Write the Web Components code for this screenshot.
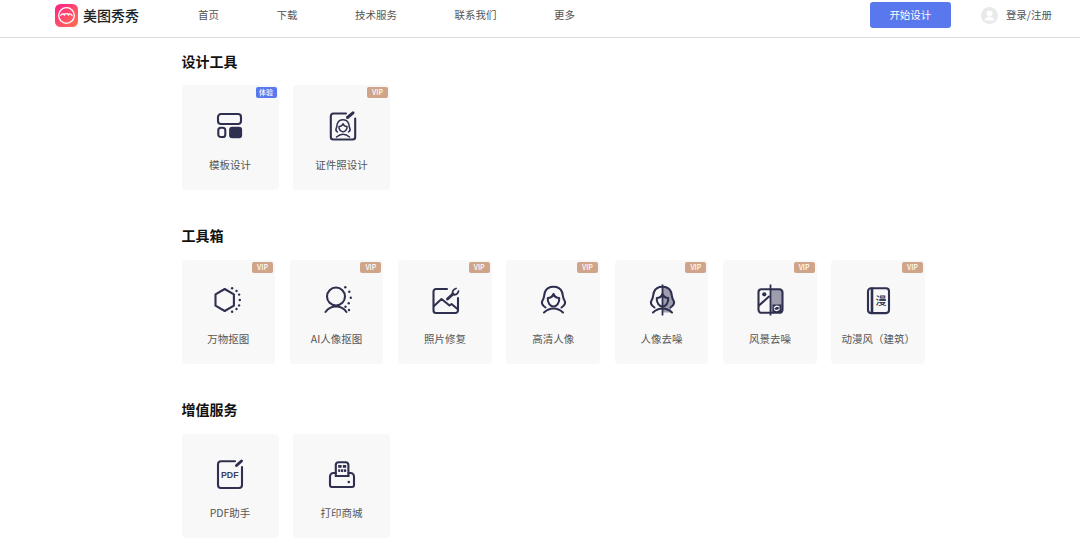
<!DOCTYPE html>
<html lang="zh"><head><meta charset="utf-8"><title>美图秀秀</title>
<style>
html,body{margin:0;padding:0;background:#fff;height:555px;overflow:hidden;font-family:"Noto Sans CJK SC","Liberation Sans",sans-serif}
svg{display:block}
.s{fill:none;stroke:#2f3050;stroke-width:2.1;stroke-linecap:round;stroke-linejoin:round}
.t{fill:none;stroke:#2f3050;stroke-width:1.5;stroke-linecap:round;stroke-linejoin:round}
.p{fill:none;stroke:#2f3050;stroke-width:3;stroke-linecap:round}
.f{fill:#2f3050}
</style></head><body>
<svg width="0" height="0" style="position:absolute"><defs>
<pattern id="ck" width="2" height="2" patternUnits="userSpaceOnUse"><rect width="2" height="2" fill="#dfdfe4"/><rect width="1" height="1" fill="#5a5b75"/><rect x="1" y="1" width="1" height="1" fill="#5a5b75"/></pattern>
</defs></svg>

<app-header></app-header>
<main-page>
<tool-section heading="设计工具">
  <tool-card wide label="模板设计" badge="体验" kind="blue"><svg viewBox="-0.5 0 32 32" width="32" height="32"><rect class="s" x="3.500" y="5" width="23" height="10" rx="3"/><rect class="s" x="3.800" y="18.800" width="7" height="9.200" rx="2.600"/><rect class="f" x="14.600" y="17.800" width="13" height="11.400" rx="3"/></svg></tool-card>
  <tool-card wide label="证件照设计" badge="VIP"><svg viewBox="0 0 32 32" width="32" height="32"><path class="s" d="M20 4.500H7.300a2.500 2.500 0 0 0-2.500 2.500V28a2.500 2.500 0 0 0 2.500 2.500h19.400a2.500 2.500 0 0 0 2.500-2.500V9.500"/><path class="p" d="M21.500 8.500l5.500-4.700"/><path class="t" d="M11.500 23c-1.500-1-2-2.500-1.200-4 .9-1.500.5-3 1-4.300 1-2.500 3.500-3.900 5.700-3.900s4.700 1.400 5.700 3.900c.5 1.300.1 2.800 1 4.300.8 1.500.3 3-1.200 4M13 17.500c1.800 0 3.300-1 4-2.800.7 1.800 2.200 2.800 4 2.800.3 3-1.800 5.200-4 5.200s-4.300-2.200-4-5.200zM10.500 28c2-1.800 4-2.800 6.500-2.800s4.500 1 6.500 2.800"/></svg></tool-card>
</tool-section>
<tool-section heading="工具箱">
  <tool-card label="万物抠图" badge="VIP"><svg viewBox="-0.5 0 32 32" width="32" height="32"><path class="s" d="M12.200 5l9.200 5.300v11.400l-9.200 5.300L3 21.700V10.300z"/><g class="f"><circle cx="19.600" cy="4.300" r="1.200"/><circle cx="24" cy="7" r="1.200"/><circle cx="26.600" cy="10.600" r="1.200"/><circle cx="27.300" cy="16" r="1.200"/><circle cx="26.600" cy="21.400" r="1.200"/><circle cx="24" cy="25" r="1.200"/><circle cx="19.600" cy="27.700" r="1.200"/></g></svg></tool-card>
  <tool-card label="AI人像抠图" badge="VIP"><svg viewBox="-0.5 0 32 32" width="32" height="32"><circle class="s" cx="14.500" cy="12.500" r="9"/><path class="s" d="M4 28c2.500-3.500 6.500-5.500 10.500-5.500S22.500 24.500 25 28"/><g class="f"><circle cx="23.800" cy="3.300" r="1.200"/><circle cx="27.800" cy="7.700" r="1.200"/><circle cx="29.300" cy="13.700" r="1.200"/><circle cx="27.200" cy="19.300" r="1.200"/><circle cx="24" cy="22.800" r="1.200"/><circle cx="27.500" cy="26" r="1.200"/></g></svg></tool-card>
  <tool-card label="照片修复" badge="VIP"><svg viewBox="-0.5 0 32 32" width="32" height="32"><path class="s" d="M17.500 5H6.500A2.500 2.500 0 0 0 4 7.500V26.500A2.500 2.500 0 0 0 6.500 29h19.500a2.500 2.500 0 0 0 2.500-2.500V14"/><path class="s" d="M4.500 22l7.500-7 8 6.500 2-1.500 6 5"/><path class="p" d="M18 15l5.500-5"/><path class="t" style="stroke-width:1.800" d="M23.200 10c-.8-2.500.6-4.700 3.300-5.500M23.500 10.500c2.500.8 4.700-.6 5.500-3.300"/></svg></tool-card>
  <tool-card label="高清人像" badge="VIP"><svg viewBox="-0.5 0 32 32" width="32" height="32"><path class="s" d="M8 23.500C5 21.500 3.500 19 5 16.500 7 13.500 6.500 10.500 7.500 8 9 4.200 13 2.800 16 2.800s7 1.400 8.500 5.200c1 2.500.5 5.500 2.500 8.500 1.500 2.500 0 5-3 7"/><path class="s" d="M10.300 14c3 0 4.700-1.500 5.700-4 1 2.500 2.700 4 5.700 4 .6 5-2.700 8.500-5.700 8.500S9.700 19 10.300 14z"/><path class="s" d="M6.500 28.500c3-2.800 6-4 9.500-4s6.500 1.200 9.500 4"/></svg></tool-card>
  <tool-card label="人像去噪" badge="VIP"><svg viewBox="-0.5 0 32 32" width="32" height="32"><path fill="url(#ck)" d="M16 2.800c3 0 7 1.400 8.500 5.200 1 2.500.5 5.500 2.500 8.500 1.500 2.500 0 5-3 7l1.500 5H16z"/><path class="s" d="M8 23.500C5 21.500 3.500 19 5 16.500 7 13.500 6.500 10.500 7.500 8 9 4.200 13 2.800 16 2.800s7 1.400 8.500 5.200c1 2.500.5 5.500 2.500 8.500 1.500 2.500 0 5-3 7"/><path class="s" d="M10.300 14c3 0 4.700-1.500 5.700-4 1 2.500 2.700 4 5.700 4 .6 5-2.700 8.500-5.700 8.500S9.700 19 10.300 14z"/><path class="s" d="M6.500 28.500c3-2.800 6-4 9.500-4s6.500 1.200 9.500 4"/><path d="M16 0.500v31" stroke="#2f3050" stroke-width="1.800"/></svg></tool-card>
  <tool-card label="风景去噪" badge="VIP"><svg viewBox="-0.5 0 32 32" width="32" height="32"><path fill="url(#ck)" d="M16 5h9a3 3 0 0 1 3 3v18a3 3 0 0 1-3 3h-9z"/><path class="s" d="M15.800 5.300H7a3 3 0 0 0-3 3v17.500a3 3 0 0 0 3 3h8.800"/><path class="s" d="M16 5.300h9a3 3 0 0 1 3 3v17.500a3 3 0 0 1-3 3h-9"/><circle class="f" cx="9.800" cy="10.300" r="2.100"/><path class="s" d="M4.500 21.500l10-9"/><path d="M16 0.500v31" stroke="#2f3050" stroke-width="1.800"/><path fill="#2f3050" d="M18 20.500h9v7.500h-9z"/><path fill="none" stroke="#f8f8f8" stroke-width="1.300" stroke-linecap="round" d="M19.800 24c.8-2 3.300-2.300 4.800-1M24.800 25c-1 1.700-3.300 1.900-4.800.8"/></svg></tool-card>
  <tool-card label="动漫风（建筑）" badge="VIP"><svg viewBox="-0.5 0 32 32" width="32" height="32"><rect class="s" x="5.500" y="4.300" width="21" height="24.800" rx="3"/><path class="s" d="M9.500 4.800v24" style="stroke-width:2.600"/><text x="18.400" y="21" text-anchor="middle" font-size="11" font-weight="500" fill="#2f3050" font-family="Noto Sans CJK SC">漫</text></svg></tool-card>
</tool-section>
<tool-section heading="增值服务">
  <tool-card wide label="PDF助手"><svg viewBox="0 0 32 32" width="32" height="32"><path class="s" d="M21 3.200H7a3 3 0 0 0-3 3V27a3 3 0 0 0 3 3h18a3 3 0 0 0 3-3V9"/><path class="p" d="M22.500 7.500l5-4.500"/><text x="15.800" y="20.200" text-anchor="middle" font-size="8.800" font-weight="700" fill="#3d3e5a" font-family="Liberation Sans">PDF</text></svg></tool-card>
  <tool-card wide label="打印商城"><svg viewBox="0 0 32 32" width="32" height="32"><path class="s" d="M9.800 18V7a2.800 2.800 0 0 1 2.800-2.800h7a2.800 2.800 0 0 1 2.800 2.800v11"/><path class="s" d="M9.500 15H7.500A3.500 3.500 0 0 0 4 18.500V27a2 2 0 0 0 2 2h20a2 2 0 0 0 2-2v-8.500A3.500 3.500 0 0 0 24.500 15h-2"/><path class="s" d="M9.800 18h12.700"/><g class="f"><rect x="12.200" y="7" width="3.400" height="2.800"/><rect x="16.800" y="7" width="3.400" height="2.800"/><rect x="12.200" y="11.300" width="2.100" height="2.600"/><rect x="15" y="11.300" width="2.100" height="2.600"/><rect x="17.800" y="11.300" width="2.400" height="2.600"/><circle cx="22.800" cy="24" r="1.300"/></g></svg></tool-card>
</tool-section>
</main-page>

<script>
function def(name, css, html){
  customElements.define(name, class extends HTMLElement{
    constructor(){super();const r=this.attachShadow({mode:'open'});r.innerHTML='<style>'+css+'</style>'+(typeof html==='function'?html(this):html);}
  });
}
const FONT='"Noto Sans CJK SC","Liberation Sans",sans-serif';
def('nav-link',`:host{display:block;font:10.5px/14px ${FONT};color:#555;white-space:nowrap}`,'<slot></slot>');
def('app-logo',`:host{display:flex;align-items:center;gap:5px}
 span{font:500 14px/20px ${FONT};color:#222;white-space:nowrap}`,
 `<svg width="23" height="23" viewBox="0 0 23 23" style="display:block"><defs><linearGradient id="g" x1="0" y1="0" x2="1" y2="1"><stop offset="0" stop-color="#ff1f86"/><stop offset="1" stop-color="#ff7550"/></linearGradient></defs><rect width="23" height="23" rx="5.500" fill="url(#g)"/><circle cx="11.500" cy="11.500" r="7.800" fill="none" stroke="#fff" stroke-width="1.300"/><path d="M5.800 11.200c1-1.200 2-1.500 3-1l.5 1 .6-1.300c1-.3 2-.2 3 0l.5 1.300.6-1.300c1-.2 2 .2 3 1.300" fill="none" stroke="#fff" stroke-width="1.300" stroke-linecap="round" stroke-linejoin="round"/></svg><span>美图秀秀</span>`);
def('app-header',`:host{display:flex;align-items:center;box-sizing:border-box;height:38px;border-bottom:1px solid #dcdcdc;padding:0 28px 7px 55px;background:#fff}
 nav{display:flex;gap:57.500px;margin-left:59px}
 button{all:unset;box-sizing:border-box;width:81px;height:26px;margin-left:auto;background:#5a78ee;border-radius:3px;color:#fff;font:10.5px/26px ${FONT};text-align:center}
 .user{display:flex;align-items:center;gap:8px;margin-left:30px;font:10.5px/14px ${FONT};color:#555;white-space:nowrap}`,
 `<app-logo></app-logo><nav><nav-link>首页</nav-link><nav-link>下载</nav-link><nav-link>技术服务</nav-link><nav-link>联系我们</nav-link><nav-link>更多</nav-link></nav>
 <button>开始设计</button><div class="user"><svg width="17" height="17" viewBox="0 0 17 17" style="display:block"><circle cx="8.500" cy="8.500" r="8.500" fill="#e9e9e9"/><circle cx="8.500" cy="6.500" r="3" fill="#fff"/><path d="M3.500 13.500c.5-2.500 2.500-3.500 5-3.500s4.500 1 5 3.500z" fill="#fff"/></svg><span>登录/注册</span></div>`);
def('main-page',`:host{display:flex;flex-direction:column;gap:35.300px;padding:12.800px 0 0 181.500px}`,'<slot></slot>');
def('tool-section',`:host{display:flex;flex-direction:column;gap:14.500px}
 h2{margin:0;font:700 14px/20px ${FONT};color:#111}
 .row{display:flex;gap:14.830px}`,
 el=>`<h2>${el.getAttribute('heading')}</h2><div class="row"><slot></slot></div>`);
def('vip-badge',`:host{display:block;height:11px;width:21px;border-radius:2px;background:var(--bg,#cfa488);color:#fff;font:500 7px/11px ${FONT};text-align:center;white-space:nowrap}`,'<slot></slot>');
def('tool-card',`:host{display:flex;flex-direction:column;align-items:center;position:relative;box-sizing:border-box;width:93.500px;height:104.500px;padding-top:24px;background:#f8f8f8;border-radius:4px}
 :host([wide]){width:97px;margin-right:-.330px}
 .b{position:absolute;top:2px;right:2px}
 .l{margin-top:16.400px;font:10.5px/14px ${FONT};color:#555;white-space:nowrap}`,
 el=>{const b=el.getAttribute('badge');const blue=el.getAttribute('kind')==='blue';
  return `${b?`<vip-badge class="b" style="${blue?'--bg:#5a78ee':''}">${b}</vip-badge>`:''}<slot></slot><div class="l">${el.getAttribute('label')}</div>`;});
</script>
</body></html>
